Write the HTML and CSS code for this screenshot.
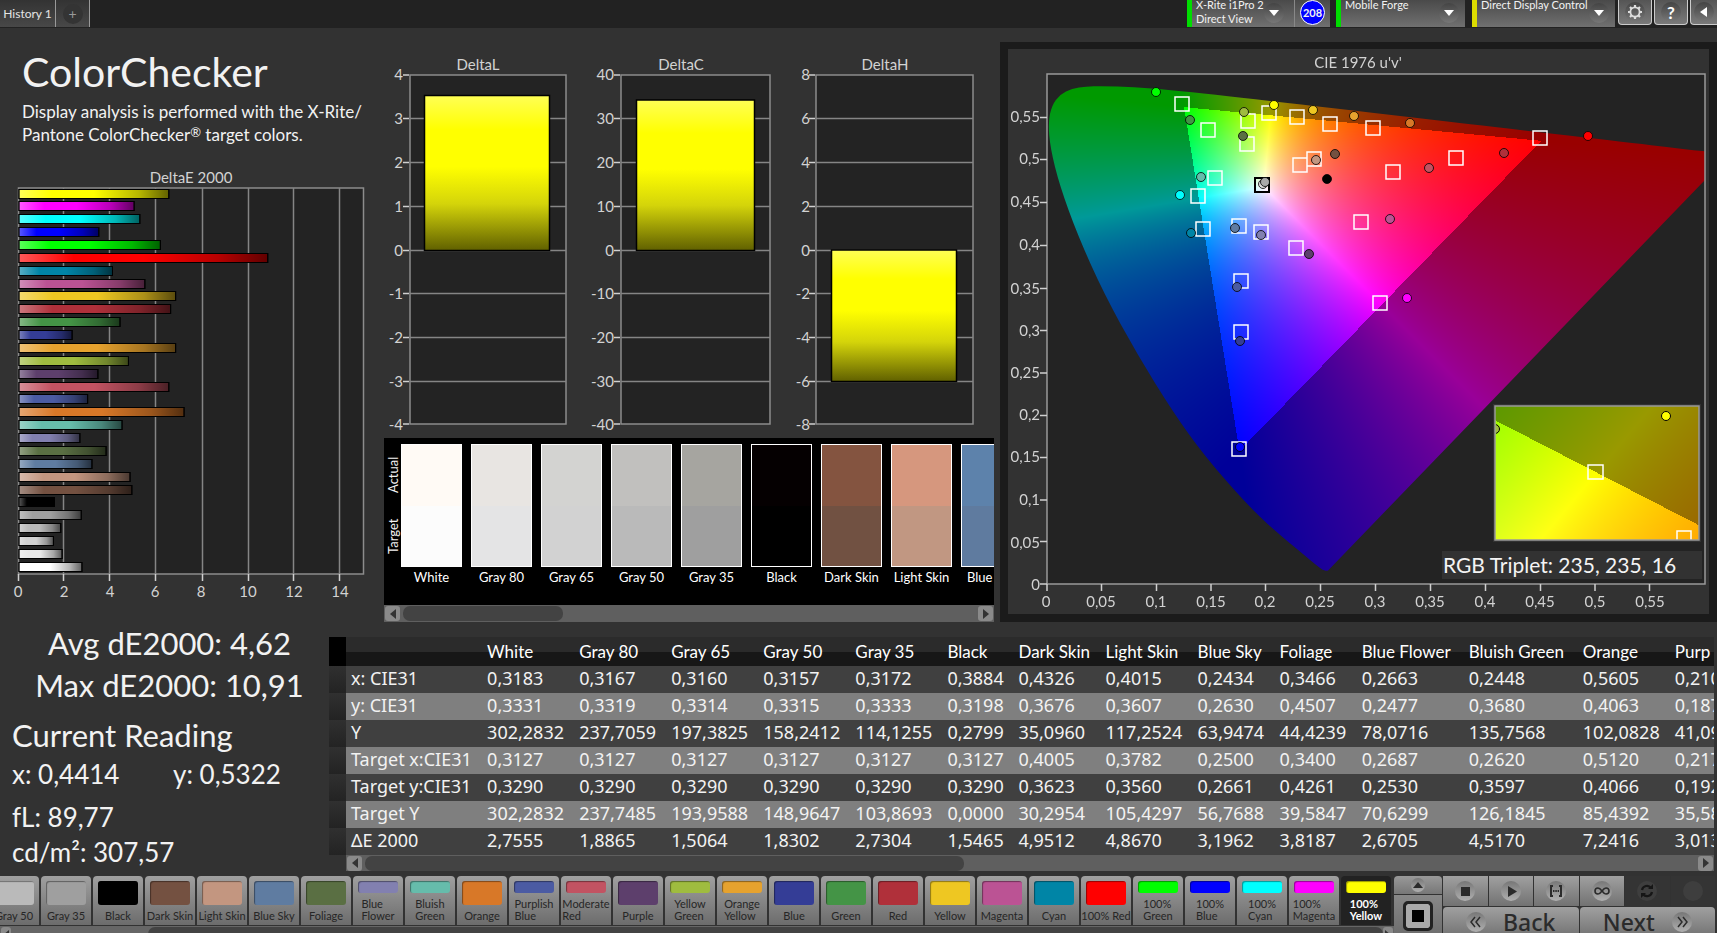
FILE: index.html
```html
<!DOCTYPE html>
<html lang="en">
<head>
<meta charset="utf-8">
<title>ColorChecker</title>
<link rel="stylesheet" href="styles.css">
</head>
<body>
<svg class="defs" width="0" height="0" aria-hidden="true">
  <defs>
    <linearGradient id="shade-h"><stop offset="0" stop-color="#fff" stop-opacity=".35"/><stop offset=".22" stop-color="#fff" stop-opacity="0"/><stop offset=".5" stop-color="#000" stop-opacity="0"/><stop offset=".8" stop-color="#000" stop-opacity=".28"/><stop offset="1" stop-color="#000" stop-opacity=".62"/></linearGradient>
    <linearGradient id="shade-v" x2="0" y2="1"><stop offset="0" stop-color="#ff5"/><stop offset=".22" stop-color="#ff0"/><stop offset=".46" stop-color="#ff0"/><stop offset=".7" stop-color="#d4d40a"/><stop offset="1" stop-color="#606000"/></linearGradient>
  </defs>
</svg>

<header class="topbar">
  <nav class="tabs">
    <button class="tab" type="button">History 1</button>
    <button class="tab tab-add" type="button" aria-label="Add history"><span class="knob">+</span></button>
  </nav>
  <div class="devices">
    <div class="device device-meter">
      <button class="device-main" type="button"><span>X-Rite i1Pro 2<br>Direct View</span><span class="knob"><span class="caret"></span></span></button>
      <span class="badge">208</span>
    </div>
    <button class="device device-source" type="button"><span>Mobile Forge</span><span class="knob"><span class="caret"></span></span></button>
    <button class="device device-display" type="button"><span>Direct Display Control</span><span class="knob"><span class="caret"></span></span></button>
    <div class="tools">
      <button class="tool" type="button" aria-label="Settings"><span class="knob"><svg width="18" height="18" viewBox="0 0 18 18"><circle cx="9" cy="9" r="4.6" fill="none" stroke="#ddd" stroke-width="1.8"/><path d="M9 2v2.500M9 13.500v2.500M2 9h2.500M13.500 9h2.500M4 4l1.700 1.700M12.300 12.300l1.700 1.700M4 14l1.700-1.700M12.300 5.700L14 4" stroke="#ddd" stroke-width="2.200"/></svg></span></button>
      <button class="tool" type="button" aria-label="Help"><span class="knob knob-help">?</span></button>
      <button class="tool" type="button" aria-label="Collapse"><span class="knob"><svg width="10" height="12" viewBox="0 0 10 12"><path d="M8 1v10L1 6z" fill="#fff"/></svg></span></button>
    </div>
  </div>
</header>

<main>
<div class="charts">
  <section class="summary">
    <h1>ColorChecker</h1>
    <p>Display analysis is performed with the X-Rite/<br>Pantone ColorChecker<sup>®</sup> target colors.</p>
    <svg class="chart" viewBox="0 0 384 437" role="img" aria-label="DeltaE 2000">
      <text x="191" y="15" text-anchor="middle">DeltaE 2000</text>
      <rect x="18.500" y="20" width="345" height="386" class="plot"/>
      <path class="grid" d="M63.500 20v386M109.500 20v386M155.500 20v386M202.500 20v386M248.500 20v386M293.500 20v386M339.500 20v386"/>
      <path class="tick" d="M18.500 406v7M63.500 406v7M109.500 406v7M155.500 406v7M202.500 406v7M248.500 406v7M293.500 406v7M339.500 406v7"/>
      <g id="bars"></g>
      <g text-anchor="middle"><text x="18" y="429">0</text><text x="64" y="429">2</text><text x="110" y="429">4</text><text x="155" y="429">6</text><text x="201" y="429">8</text><text x="248" y="429">10</text><text x="294" y="429">12</text><text x="340" y="429">14</text></g>
    </svg>
  </section>

  <section class="deltas">
    <svg class="chart" viewBox="0 0 616 388" role="img" aria-label="DeltaL, DeltaC and DeltaH">
      <g text-anchor="middle"><text x="94" y="20">DeltaL</text><text x="297" y="20">DeltaC</text><text x="501" y="20">DeltaH</text></g>
      <rect x="26" y="25" width="156" height="349" class="plot"/>
      <rect x="237" y="25" width="149" height="349" class="plot"/>
      <rect x="432" y="25" width="157" height="349" class="plot"/>
      <path class="grid" d="M26 68.500h156M26 112.500h156M26 156.500h156M26 200.500h156M26 243.500h156M26 287.500h156M26 331.500h156M237 68.500h149M237 112.500h149M237 156.500h149M237 200.500h149M237 243.500h149M237 287.500h149M237 331.500h149M432 68.500h157M432 112.500h157M432 156.500h157M432 200.500h157M432 243.500h157M432 287.500h157M432 331.500h157"/>
      <path class="tick" d="M19 25h6M19 68.500h6M19 112.500h6M19 156.500h6M19 200.500h6M19 243.500h6M19 287.500h6M19 331.500h6M19 374h6M230 25h6M230 68.500h6M230 112.500h6M230 156.500h6M230 200.500h6M230 243.500h6M230 287.500h6M230 331.500h6M230 374h6M425 25h6M425 68.500h6M425 112.500h6M425 156.500h6M425 200.500h6M425 243.500h6M425 287.500h6M425 331.500h6M425 374h6"/>
      <g fill="url(#shade-v)" stroke="#000" stroke-width="1.500"><rect x="40.500" y="45.500" width="125" height="155"/><rect x="252.500" y="50" width="118" height="150.500"/><rect x="447.500" y="200" width="125" height="131.500"/></g>
      <g text-anchor="end">
        <text x="19" y="30">4</text><text x="19" y="74">3</text><text x="19" y="118">2</text><text x="19" y="162">1</text><text x="19" y="206">0</text><text x="19" y="249">-1</text><text x="19" y="293">-2</text><text x="19" y="337">-3</text><text x="19" y="380">-4</text>
        <text x="230" y="30">40</text><text x="230" y="74">30</text><text x="230" y="118">20</text><text x="230" y="162">10</text><text x="230" y="206">0</text><text x="230" y="249">-10</text><text x="230" y="293">-20</text><text x="230" y="337">-30</text><text x="230" y="380">-40</text>
        <text x="426" y="30">8</text><text x="426" y="74">6</text><text x="426" y="118">4</text><text x="426" y="162">2</text><text x="426" y="206">0</text><text x="426" y="249">-2</text><text x="426" y="293">-4</text><text x="426" y="337">-6</text><text x="426" y="380">-8</text>
      </g>
    </svg>
    <div class="compare">
      <div class="compare-view">
        <div class="compare-rows"><span>Target</span><span>Actual</span></div>
        <figure class="pair"><div class="pair-box"><i style="background:#fffaf5"></i><i style="background:#fcfcfc"></i></div><figcaption>White</figcaption></figure>
        <figure class="pair"><div class="pair-box"><i style="background:#e8e5e2"></i><i style="background:#e4e4e5"></i></div><figcaption>Gray 80</figcaption></figure>
        <figure class="pair"><div class="pair-box"><i style="background:#d3d3d1"></i><i style="background:#d2d2d2"></i></div><figcaption>Gray 65</figcaption></figure>
        <figure class="pair"><div class="pair-box"><i style="background:#c1c0be"></i><i style="background:#bababa"></i></div><figcaption>Gray 50</figcaption></figure>
        <figure class="pair"><div class="pair-box"><i style="background:#a6a5a0"></i><i style="background:#9f9f9f"></i></div><figcaption>Gray 35</figcaption></figure>
        <figure class="pair"><div class="pair-box"><i style="background:#050001"></i><i style="background:#000000"></i></div><figcaption>Black</figcaption></figure>
        <figure class="pair"><div class="pair-box"><i style="background:#845440"></i><i style="background:#715142"></i></div><figcaption>Dark Skin</figcaption></figure>
        <figure class="pair"><div class="pair-box"><i style="background:#d6977e"></i><i style="background:#c19782"></i></div><figcaption>Light Skin</figcaption></figure>
        <figure class="pair"><div class="pair-box"><i style="background:#5d82ab"></i><i style="background:#5f7b9f"></i></div><figcaption>Blue Sky</figcaption></figure>
      </div>
      <div class="scroll">
        <button class="arrow arrow-left" type="button" aria-label="Scroll left"></button>
        <div class="track"><div class="thumb" style="width:28%"></div></div>
        <button class="arrow arrow-right" type="button" aria-label="Scroll right"></button>
      </div>
    </div>
  </section>

  <section class="cie">
    <div class="cie-stack">
      <canvas id="gamut" width="701" height="565"></canvas>
      <svg class="chart" viewBox="0 0 701 565" role="img" aria-label="CIE 1976 u'v' chromaticity diagram">
        <defs><clipPath id="inset-clip"><rect x="488" y="358" width="202" height="133"/></clipPath></defs>
        <text x="350" y="19" text-anchor="middle">CIE 1976 u'v'</text>
        <path d="M39 25H697V535H39Z" class="frame"/>
        <path class="tick" d="M32 535h7M32 492.500h7M32 451h7M32 408.500h7M32 366.500h7M32 324h7M32 281.500h7M32 239.500h7M32 196.500h7M32 153.500h7M32 110.500h7M32 68.500h7M39 535v7M93.500 535v7M148.500 535v7M203 535v7M257.500 535v7M312.500 535v7M367.500 535v7M422.500 535v7M477.500 535v7M532.500 535v7M587 535v7M641.500 535v7"/>
        <g text-anchor="end"><text x="32" y="541">0</text><text x="32" y="499">0,05</text><text x="32" y="456">0,1</text><text x="32" y="413">0,15</text><text x="32" y="371">0,2</text><text x="32" y="329">0,25</text><text x="32" y="287">0,3</text><text x="32" y="245">0,35</text><text x="32" y="201">0,4</text><text x="32" y="158">0,45</text><text x="32" y="115">0,5</text><text x="32" y="73">0,55</text></g>
        <g text-anchor="middle"><text x="38" y="558">0</text><text x="93" y="558">0,05</text><text x="148" y="558">0,1</text><text x="203" y="558">0,15</text><text x="257" y="558">0,2</text><text x="312" y="558">0,25</text><text x="367" y="558">0,3</text><text x="422" y="558">0,35</text><text x="477" y="558">0,4</text><text x="532" y="558">0,45</text><text x="587" y="558">0,5</text><text x="642" y="558">0,55</text></g>
        <path class="target" d="M167 48h14v14h-14zM193 74h14v14h-14zM233 65h14v14h-14zM232 88h14v14h-14zM254 57h14v14h-14zM282 61h14v14h-14zM315 68h14v14h-14zM358 72h14v14h-14zM525 82h14v14h-14zM441 102h14v14h-14zM378 116h14v14h-14zM299 103h14v14h-14zM285 109h14v14h-14zM200 122h14v14h-14zM183 140h14v14h-14zM188 173h14v14h-14zM224 170h14v14h-14zM246 176h14v14h-14zM281 192h14v14h-14zM346 166h14v14h-14zM365 247h14v14h-14zM226 225h14v14h-14zM226 276h14v14h-14zM224 393h14v14h-14z"/>
        <path d="M247 129h14v14h-14z" fill="none" stroke="#000" stroke-width="2"/>
        <g stroke="#000" stroke-opacity=".8">
          <circle cx="148" cy="43" r="4.500" fill="#0f0"/><circle cx="182" cy="71" r="4.500" fill="#449446"/><circle cx="236" cy="63" r="4.500" fill="#9fbc3f"/><circle cx="266" cy="56" r="4.500" fill="#ff0"/><circle cx="305" cy="61" r="4.500" fill="#eec722"/><circle cx="346" cy="67" r="4.500" fill="#e6a22e"/><circle cx="402" cy="74" r="4.500" fill="#d87828"/><circle cx="580" cy="87" r="4.500" fill="#f00"/><circle cx="496" cy="104" r="4.500" fill="#b0303a"/><circle cx="421" cy="119" r="4.500" fill="#c25362"/><circle cx="327" cy="105" r="4.500" fill="#745141"/><circle cx="308" cy="111" r="4.500" fill="#c39680"/><circle cx="319" cy="130" r="4.500" fill="#000"/><circle cx="255" cy="135" r="4.500" fill="#ddd"/><circle cx="257" cy="133" r="4.500" fill="#aaa"/><circle cx="235" cy="87" r="4.500" fill="#5a6f43"/><circle cx="193" cy="128" r="4.500" fill="#66bcab"/><circle cx="172" cy="146" r="4.500" fill="#0ff"/><circle cx="183" cy="184" r="4.500" fill="#0085a6"/><circle cx="227" cy="179" r="4.500" fill="#5f7ca1"/><circle cx="253" cy="186" r="4.500" fill="#8280b0"/><circle cx="301" cy="205" r="4.500" fill="#5d3f6c"/><circle cx="382" cy="170" r="4.500" fill="#bb5394"/><circle cx="399" cy="249" r="4.500" fill="#f0f"/><circle cx="229" cy="238" r="4.500" fill="#4b5ba3"/><circle cx="232" cy="292" r="4.500" fill="#343d96"/><circle cx="232" cy="398" r="4.500" fill="#00f"/>
        </g>
        <g clip-path="url(#inset-clip)"><circle cx="487" cy="380" r="4.500" fill="#9fbc3f" stroke="#000"/><circle cx="658" cy="367" r="4.500" fill="#ff0" stroke="#000"/><path class="target" d="M580 416h15v14h-15zM669 482h14v14h-14z"/></g>
        <rect x="487" y="357" width="204" height="134" class="frame"/>
        <rect x="434" y="502" width="260" height="28" fill="#323232"/>
        <text x="435" y="524" class="triplet">RGB Triplet: 235, 235, 16</text>
      </svg>
    </div>
  </section>
</div>

<div class="readings">
  <section class="stats">
    <p class="stat-large">Avg dE2000: 4,62</p>
    <p class="stat-large">Max dE2000: 10,91</p>
    <h2>Current Reading</h2>
    <p class="stat-pair"><span>x: 0,4414</span><span>y: 0,5322</span></p>
    <p class="stat-line">fL: 89,77</p>
    <p class="stat-line">cd/m²: 307,57</p>
  </section>
  <section class="data">
    <table>
      <colgroup><col class="c-mark"><col class="c-name"><col class="c-l"><col class="c-l"><col class="c-l"><col class="c-l"><col class="c-l"><col class="c-s"><col class="c-m"><col class="c-l"><col class="c-f"><col class="c-f"><col class="c-w"><col class="c-x"><col class="c-l"><col class="c-l"></colgroup>
      <thead><tr><th></th><th></th><th scope="col">White</th><th scope="col">Gray 80</th><th scope="col">Gray 65</th><th scope="col">Gray 50</th><th scope="col">Gray 35</th><th scope="col">Black</th><th scope="col">Dark Skin</th><th scope="col">Light Skin</th><th scope="col">Blue Sky</th><th scope="col">Foliage</th><th scope="col">Blue Flower</th><th scope="col">Bluish Green</th><th scope="col">Orange</th><th scope="col">Purp</th></tr></thead>
      <tbody>
        <tr><td></td><th scope="row">x: CIE31</th><td>0,3183</td><td>0,3167</td><td>0,3160</td><td>0,3157</td><td>0,3172</td><td>0,3884</td><td>0,4326</td><td>0,4015</td><td>0,2434</td><td>0,3466</td><td>0,2663</td><td>0,2448</td><td>0,5605</td><td>0,210</td></tr>
        <tr><td></td><th scope="row">y: CIE31</th><td>0,3331</td><td>0,3319</td><td>0,3314</td><td>0,3315</td><td>0,3333</td><td>0,3198</td><td>0,3676</td><td>0,3607</td><td>0,2630</td><td>0,4507</td><td>0,2477</td><td>0,3680</td><td>0,4063</td><td>0,187</td></tr>
        <tr><td></td><th scope="row">Y</th><td>302,2832</td><td>237,7059</td><td>197,3825</td><td>158,2412</td><td>114,1255</td><td>0,2799</td><td>35,0960</td><td>117,2524</td><td>63,9474</td><td>44,4239</td><td>78,0716</td><td>135,7568</td><td>102,0828</td><td>41,09</td></tr>
        <tr><td></td><th scope="row">Target x:CIE31</th><td>0,3127</td><td>0,3127</td><td>0,3127</td><td>0,3127</td><td>0,3127</td><td>0,3127</td><td>0,4005</td><td>0,3782</td><td>0,2500</td><td>0,3400</td><td>0,2687</td><td>0,2620</td><td>0,5120</td><td>0,217</td></tr>
        <tr><td></td><th scope="row">Target y:CIE31</th><td>0,3290</td><td>0,3290</td><td>0,3290</td><td>0,3290</td><td>0,3290</td><td>0,3290</td><td>0,3623</td><td>0,3560</td><td>0,2661</td><td>0,4261</td><td>0,2530</td><td>0,3597</td><td>0,4066</td><td>0,192</td></tr>
        <tr><td></td><th scope="row">Target Y</th><td>302,2832</td><td>237,7485</td><td>193,9588</td><td>148,9647</td><td>103,8693</td><td>0,0000</td><td>30,2954</td><td>105,4297</td><td>56,7688</td><td>39,5847</td><td>70,6299</td><td>126,1845</td><td>85,4392</td><td>35,58</td></tr>
        <tr><td></td><th scope="row">ΔE 2000</th><td>2,7555</td><td>1,8865</td><td>1,5064</td><td>1,8302</td><td>2,7304</td><td>1,5465</td><td>4,9512</td><td>4,8670</td><td>3,1962</td><td>3,8187</td><td>2,6705</td><td>4,5170</td><td>7,2416</td><td>3,013</td></tr>
      </tbody>
    </table>
    <div class="scroll">
      <button class="arrow arrow-left" type="button" aria-label="Scroll left"></button>
      <div class="track"><div class="thumb" style="width:45%"></div></div>
      <button class="arrow arrow-right" type="button" aria-label="Scroll right"></button>
    </div>
  </section>
</div>
</main>

<footer class="dock">
  <div class="patches">
    <div class="patch-list">
      <button class="patch" type="button"><i style="background:#bababa"></i><span>Gray 50</span></button>
      <button class="patch" type="button"><i style="background:#9f9f9f"></i><span>Gray 35</span></button>
      <button class="patch" type="button"><i style="background:#000000"></i><span>Black</span></button>
      <button class="patch" type="button"><i style="background:#745141"></i><span>Dark Skin</span></button>
      <button class="patch" type="button"><i style="background:#c39680"></i><span>Light Skin</span></button>
      <button class="patch" type="button"><i style="background:#5f7ca1"></i><span>Blue Sky</span></button>
      <button class="patch" type="button"><i style="background:#5a6f43"></i><span>Foliage</span></button>
      <button class="patch two" type="button"><i style="background:#8280b0"></i><span>Blue<br>Flower</span></button>
      <button class="patch two" type="button"><i style="background:#66bcab"></i><span>Bluish<br>Green</span></button>
      <button class="patch" type="button"><i style="background:#d87828"></i><span>Orange</span></button>
      <button class="patch two" type="button"><i style="background:#4b5ba3"></i><span>Purplish<br>Blue</span></button>
      <button class="patch two" type="button"><i style="background:#c25362"></i><span>Moderate<br>Red</span></button>
      <button class="patch" type="button"><i style="background:#5d3f6c"></i><span>Purple</span></button>
      <button class="patch two" type="button"><i style="background:#9fbc3f"></i><span>Yellow<br>Green</span></button>
      <button class="patch two" type="button"><i style="background:#e6a22e"></i><span>Orange<br>Yellow</span></button>
      <button class="patch" type="button"><i style="background:#343d96"></i><span>Blue</span></button>
      <button class="patch" type="button"><i style="background:#449446"></i><span>Green</span></button>
      <button class="patch" type="button"><i style="background:#b0303a"></i><span>Red</span></button>
      <button class="patch" type="button"><i style="background:#eec722"></i><span>Yellow</span></button>
      <button class="patch" type="button"><i style="background:#bb5394"></i><span>Magenta</span></button>
      <button class="patch" type="button"><i style="background:#0085a6"></i><span>Cyan</span></button>
      <button class="patch" type="button"><i style="background:#ff0000"></i><span>100% Red</span></button>
      <button class="patch two" type="button"><i style="background:#00ff00"></i><span>100%<br>Green</span></button>
      <button class="patch two" type="button"><i style="background:#0000ff"></i><span>100%<br>Blue</span></button>
      <button class="patch two" type="button"><i style="background:#00ffff"></i><span>100%<br>Cyan</span></button>
      <button class="patch two" type="button"><i style="background:#ff00ff"></i><span>100%<br>Magenta</span></button>
      <button class="patch two selected" type="button"><i style="background:#ffff00"></i><span>100%<br>Yellow</span></button>
    </div>
    <div class="scroll scroll-dock">
      <button class="arrow arrow-left" type="button" aria-label="Scroll left"></button>
      <div class="track"><div class="thumb thumb-end" style="width:90%"></div></div>
      <button class="arrow arrow-right" type="button" aria-label="Scroll right"></button>
    </div>
  </div>
  <div class="monitor">
    <button class="monitor-up" type="button" aria-label="Expand"><span class="knob-light"><svg width="10" height="6" viewBox="0 0 10 6"><path d="M5 0l5 6H0z" fill="#2b2b2b"/></svg></span></button>
    <button class="monitor-window" type="button" aria-label="Pattern window"><span></span></button>
  </div>
  <div class="transport">
    <button type="button" aria-label="Stop"><span class="knob-light"><svg width="20" height="20" viewBox="0 0 20 20"><path d="M6 6h9v9H6z" fill="#2b2b2b"/></svg></span></button>
    <button type="button" aria-label="Play"><span class="knob-light"><svg width="20" height="20" viewBox="0 0 20 20"><path d="M7 5l9 5.500-9 5.500z" fill="#2b2b2b"/></svg></span></button>
    <button type="button" aria-label="Read series"><span class="knob-light"><svg width="20" height="20" viewBox="0 0 20 20" fill="none" stroke="#2b2b2b" stroke-width="2"><path d="M7 5H5v10h2M13 5h2v10h-2"/><path d="M7 10h6" stroke-dasharray="1.500 .8"/></svg></span></button>
    <button type="button" aria-label="Read continuously"><span class="knob-light"><svg width="20" height="20" viewBox="0 0 20 20" fill="none" stroke="#2b2b2b" stroke-width="1.600"><path d="M10 10c-1.500-2-2.500-3-4-3a3 3 0 0 0 0 6c1.500 0 2.500-1 4-3s2.500-3 4-3a3 3 0 0 1 0 6c-1.500 0-2.500-1-4-3z"/></svg></span></button>
    <button class="off" type="button" aria-label="Repeat"><span class="knob-light"><svg width="20" height="20" viewBox="0 0 20 20" fill="none" stroke="#161616" stroke-width="2.200"><path d="M5 9a5 5 0 0 1 9-2M15 11a5 5 0 0 1-9 2"/><path d="M16 3v5h-5zM4 17v-5h5z" fill="#161616" stroke="none"/></svg></span></button>
    <button class="off" type="button" aria-label="Record"><span class="knob-light"></span></button>
    <button class="step" type="button"><span class="knob-light"><svg width="18" height="18" viewBox="0 0 18 18" fill="none" stroke="#2b2b2b" stroke-width="1.500"><path d="M8 4L4 9l4 5M13 4L9 9l4 5"/></svg></span><span>Back</span></button>
    <button class="step" type="button"><span>Next</span><span class="knob-light"><svg width="18" height="18" viewBox="0 0 18 18" fill="none" stroke="#2b2b2b" stroke-width="1.500"><path d="M5 4l4 5-4 5M10 4l4 5-4 5"/></svg></span></button>
  </div>
</footer>
<script src="script.js"></script>
</body>
</html>
```
FILE: styles.css
```css
* { box-sizing: border-box; }
body {
  margin: 0;
  min-height: 100vh;
  background: #323232;
  color: #f2f2f2;
  font-family: Lato, "Open Sans", sans-serif;
  font-size: 15px;
  overflow-x: hidden;
}
button { font: inherit; color: inherit; border: 0; padding: 0; background: none; }
h1, h2, p, figure { margin: 0; font-weight: 400; }
svg, canvas { display: block; }
sup { font-size: 13px; line-height: 0; vertical-align: 4px; }
.defs { position: absolute; }

/* top bar */
.topbar { display: flex; justify-content: space-between; height: 28px; background: #222; overflow: hidden; }
.tabs { display: flex; height: 27px; }
.tab {
  width: 56px;
  font-size: 12px;
  color: #e4e4e4;
  background: linear-gradient(#333, #484848);
  border-right: 1px solid #999;
}
.tab-add { width: 34px; display: flex; align-items: center; justify-content: center; }
.tab-add .knob { background: #343434; color: #999; font-size: 14px; }
.knob {
  display: flex;
  flex: none;
  align-items: center;
  justify-content: center;
  width: 20px;
  height: 20px;
  border-radius: 50%;
  background: linear-gradient(#444, #777);
}
.caret { border: 5px solid transparent; border-top: 6px solid #fff; border-bottom: 0; }
.devices { display: flex; height: 27px; }
.device {
  display: flex;
  align-items: flex-start;
  justify-content: space-between;
  height: 27px;
  margin-right: 7px;
  font-size: 11px;
  line-height: 14px;
  text-align: left;
  color: #f2f2f2;
  background: linear-gradient(#4a4a4a, #707070);
  border-left: 5px solid #0d0;
}
.device .knob { margin-top: 3px; }
.device-meter { width: 143px; margin-right: 6px; }
.device-main { display: flex; flex: 1; height: 27px; justify-content: space-between; align-items: flex-start; padding: 0 10px 0 4px; border-right: 1px solid #888; text-align: left; line-height: 14px; }
.device-source { width: 129px; padding: 0 6px 0 4px; }
.device-display { width: 143px; padding: 0 6px 0 4px; border-left-color: #dd0; margin-right: 3px; }
.device-source > span:first-child, .device-display > span:first-child, .device-main > span:first-child { margin-top: -2px; white-space: nowrap; }
.badge {
  flex: none;
  width: 25px;
  height: 25px;
  margin: 0 5px;
  border: 1px solid #fff;
  border-radius: 50%;
  background: #00f;
  font-size: 11px;
  font-weight: 700;
  line-height: 23px;
  text-align: center;
}
.tools { display: flex; gap: 2px; }
.tool {
  display: flex;
  align-items: center;
  justify-content: center;
  width: 34px;
  height: 25px;
  background: linear-gradient(#555, #7a7a7a);
  border: 1px solid #ccc;
  border-top: 0;
  border-radius: 0 0 4px 4px;
}
.tool:last-child { width: 27px; border-right: 0; border-bottom-right-radius: 0; }
.knob-help { font-size: 17px; font-weight: 700; color: #fff; }

/* charts row */
.charts { display: grid; grid-template-columns: minmax(0, 384fr) minmax(0, 616fr) minmax(0, 717fr); align-items: start; }
.chart { width: 100%; height: auto; font-size: 15px; fill: #d2d2d2; }
.plot { fill: #232323; stroke: #8c8c8c; stroke-width: 1.5px; }
.frame { fill: none; stroke: #999; stroke-width: 1.5px; }
.grid { stroke: #858585; stroke-width: 1.5px; fill: none; }
.tick { stroke: #d0d0d0; stroke-width: 1.5px; fill: none; }
.target { fill: none; stroke: #fff; stroke-width: 1.5px; }
.triplet { font-size: 21px; fill: #f4f4f4; }
.summary { padding-top: 20px; }
.summary h1 { margin-left: 22px; font-size: 41px; line-height: 48px; }
.summary p { margin: 4px 0 22px 22px; font-size: 17px; line-height: 23px; white-space: nowrap; }
.deltas { padding-top: 22px; }
.compare { margin-right: 6px; background: #000; overflow: hidden; }
.compare-view { display: flex; gap: 9px; height: 167px; padding-top: 6px; overflow: hidden; }
.compare-rows { display: flex; flex: none; flex-direction: row; width: 17px; height: 123px; margin-right: -9px; align-items: center; justify-content: space-around; font-size: 13px; line-height: 16px; writing-mode: vertical-rl; transform: rotate(180deg); }
.pair { flex: none; width: 61px; }
.pair-box { height: 123px; border: 1px solid #fff; }
.pair-box i { display: block; height: 50%; }
.pair figcaption { margin: 1px -8px 0; font-size: 13px; line-height: 18px; text-align: center; color: #fff; white-space: nowrap; }
.scroll { display: flex; align-items: center; height: 17px; padding: 0 1px; background: #5f5f5f; }
.track { flex: 1; height: 15px; padding: 0 3px; }
.thumb { height: 15px; border-radius: 7px; background: #434343; }
.arrow { display: flex; align-items: center; justify-content: center; width: 15px; height: 15px; background: #8a8a8a; border-radius: 3px; }
.arrow::before { content: ""; border: 5px solid transparent; }
.arrow-left::before { border-right: 6px solid #333; border-left: 0; }
.arrow-right::before { border-left: 6px solid #333; border-right: 0; }
.cie { margin-top: 14px; padding: 7px 8px 8px; background: #1b1b1b; }
.cie-stack { display: grid; background: #323232; }
.cie-stack > * { grid-area: 1 / 1; width: 100%; height: auto; }

/* readings row */
.readings { display: grid; grid-template-columns: 329px minmax(0, 1fr); }
.stats { white-space: nowrap; }
.stat-large { font-size: 31px; line-height: 42px; padding-left: 10px; text-align: center; }
.stats h2 { margin: 8px 0 0 12px; font-size: 31px; line-height: 42px; }
.stat-pair { display: grid; grid-template-columns: 161px 1fr; margin-left: 12px; font-size: 26px; line-height: 36px; }
.stat-line { margin-left: 12px; font-size: 26px; line-height: 35px; }
.stat-pair + .stat-line { margin-top: 8px; }
.data { margin: 15px 3px 0 0; overflow: hidden; }
.data .scroll { margin-left: 17px; height: 16px; }
table { width: 1438px; table-layout: fixed; border-collapse: collapse; font-family: "Noto Sans", sans-serif; font-size: 18px; }
.c-mark { width: 17px; }
.c-name { width: 141px; }
.c-l { width: 92px; }
.c-s { width: 71px; }
.c-m { width: 87px; }
.c-f { width: 82px; }
.c-w { width: 107px; }
.c-x { width: 114px; }
th, td { height: 27px; padding: 0; font-weight: 400; text-align: left; line-height: 25px; padding-bottom: 2px; white-space: nowrap; }
thead th { height: 29px; padding-bottom: 0; font-family: Lato, sans-serif; font-size: 17px; color: #fff; background: linear-gradient(#2b2b2b 50%, #171717 50%); }
thead th:first-child { background: #000; }
tbody th { padding-left: 5px; }
tbody tr { background: #404040; }
tbody tr:nth-child(even) { background: #7f7f7f; }
tbody td:first-child { background: linear-gradient(#303030, #232323); }

/* dock */
.dock { display: grid; grid-template-columns: minmax(0, 1fr) 49px 274px; height: 58px; margin-top: 5px; overflow: hidden; }
.patches { overflow: hidden; }
.patch-list { display: flex; justify-content: flex-end; gap: 2px; padding-right: 3px; height: 50px; }
.patch {
  display: flex;
  flex: none;
  flex-direction: column;
  align-items: center;
  width: 50px;
  height: 49px;
  padding-top: 5px;
  font-size: 11px;
  line-height: 12px;
  color: #262626;
  text-align: left;
  white-space: nowrap;
  background: linear-gradient(#a0a0a0, #6c6c6c);
  border-radius: 4px 4px 0 0;
}
.patch i { flex: none; width: 40px; height: 24px; margin-bottom: 5px; border-radius: 3px; box-shadow: inset 1px 1px 1px #0006; }
.patch.two i { height: 12px; }
.patch.selected { background: #222; color: #fff; font-weight: 700; }
.scroll-dock { height: 17px; background: #666; }
.scroll-dock .arrow { width: 10px; }
.scroll-dock .track { padding: 0; }
.thumb-end { margin-left: auto; }
.monitor { display: flex; flex-direction: column; gap: 1px; }
.monitor button { display: flex; align-items: center; justify-content: center; width: 48px; background: linear-gradient(#999, #777); }
.monitor .monitor-up { height: 18px; border-radius: 4px 4px 0 0; }
.monitor .monitor-window { height: 42px; background: linear-gradient(#888, #6c6c6c); }
.monitor-window span { width: 30px; height: 30px; border: 3px solid #222; border-radius: 5px; background: #000; box-shadow: inset 0 0 0 6px #aaa; }
.monitor .knob-light { width: 14px; height: 14px; }
.knob-light { display: flex; flex: none; align-items: center; justify-content: center; width: 20px; height: 20px; border-radius: 50%; background: linear-gradient(#777, #b0b0b0); }
.transport { display: grid; grid-template-columns: repeat(6, 1fr); grid-template-rows: 30px 30px; gap: 1px; padding-right: 2px; }
.transport button { display: flex; align-items: center; justify-content: center; background: linear-gradient(#a0a0a0, #727272); }
.transport .off { background: #343434; }
.transport .off .knob-light { background: #3e3e3e; }
.transport .step { grid-column: span 3; gap: 17px; color: #2b2b2b; font-family: "Noto Sans", sans-serif; font-size: 23px; font-weight: 500; line-height: 30px; border-radius: 4px 4px 0 0; }
```
FILE: script.js
```js
// DeltaE bars: [value, colour]
const bars = [
  [6.57, '#ffff00'], [5.05, '#ff00ff'], [5.3, '#00ffff'], [3.5, '#0000ff'], [6.2, '#00ff00'],
  [10.91, '#ff0000'], [4.1, '#0085a6'], [5.52, '#bb5394'], [6.87, '#eec722'], [6.65, '#b0303a'],
  [4.43, '#449446'], [2.33, '#343d96'], [6.87, '#e6a22e'], [4.8, '#9fbc3f'], [3.46, '#5d3f6c'],
  [6.57, '#c25362'], [3.01, '#4b5ba3'], [7.24, '#d87828'], [4.52, '#66bcab'], [2.67, '#8280b0'],
  [3.82, '#5a6f43'], [3.2, '#5f7ca1'], [4.87, '#c39680'], [4.95, '#745141'], [1.55, '#000000'],
  [2.73, '#9f9f9f'], [1.83, '#bababa'], [1.51, '#d2d2d2'], [1.89, '#e8e8e8'], [2.76, '#ffffff']
];
const group = document.getElementById('bars');
const ns = 'http://www.w3.org/2000/svg';
bars.forEach(([value, colour], i) => {
  for (const fill of [colour, 'url(#shade-h)']) {
    const r = document.createElementNS(ns, 'rect');
    r.setAttribute('x', 19);
    r.setAttribute('y', Math.round(20.5 + i * 12.87) + 0.5);
    r.setAttribute('width', value * 22.8);
    r.setAttribute('height', 9);
    r.setAttribute('fill', fill);
    r.setAttribute('stroke', '#000');
    group.append(r);
  }
});

// Chromaticity diagram
const canvas = document.getElementById('gamut');
const ctx = canvas.getContext('2d');
const X0 = 38.6, Y0 = 535.5, SX = 1096, SY = 849.5;
const locus = [
  [.1741, .005], [.1733, .0048], [.1714, .0051], [.1689, .0069], [.1644, .0109], [.1566, .0177],
  [.144, .0297], [.1241, .0578], [.1096, .0868], [.0913, .1327], [.0687, .2007], [.0454, .295],
  [.0235, .4127], [.0082, .5384], [.0039, .6548], [.0139, .7502], [.0389, .812], [.0743, .8338],
  [.1142, .8262], [.1547, .8059], [.2296, .7543], [.3016, .6923], [.3731, .6245], [.4441, .5547],
  [.5125, .4866], [.5752, .4242], [.627, .3725], [.6915, .3083], [.719, .2809], [.7347, .2653]
];

function linear(u, v) {
  const X = 9 * u / (4 * v), Z = (12 - 3 * u - 20 * v) / (4 * v);
  return [
    3.2406 * X - 1.5372 - 0.4986 * Z,
    -0.9689 * X + 1.8758 + 0.0415 * Z,
    0.0557 * X - 0.204 + 1.057 * Z
  ];
}
function put(data, k, rgb, outside) {
  const m = Math.max(...rgb), f = outside ? 153 : 255;
  for (let c = 0; c < 3; c++) data[k + c] = f * Math.pow(Math.max(0, rgb[c]) / m, 0.95);
  data[k + 3] = 255;
}
function layer(w, h, paint) {
  const c = document.createElement('canvas');
  c.width = w;
  c.height = h;
  const cx = c.getContext('2d'), img = cx.createImageData(w, h);
  for (let y = 0; y < h; y++) for (let x = 0; x < w; x++) paint(img.data, (y * w + x) * 4, x, y);
  cx.putImageData(img, 0, 0);
  return c;
}

ctx.fillStyle = '#232323';
ctx.fillRect(39, 25, 658, 510);
const full = layer(701, 565, (d, k, x, y) => {
  const rgb = linear((x - X0) / SX, Math.max(.002, (Y0 - y) / SY));
  put(d, k, rgb, Math.min(...rgb) < 0);
});
ctx.save();
ctx.beginPath();
ctx.rect(39, 25, 658, 510);
ctx.clip();
ctx.beginPath();
const pts = locus.map(([x, y]) => {
  const n = -2 * x + 12 * y + 3;
  return [X0 + SX * 4 * x / n, Y0 - SY * 9 * y / n];
});
ctx.moveTo(...pts[0]);
for (let i = 1; i < pts.length - 1; i++) {
  ctx.quadraticCurveTo(...pts[i], (pts[i][0] + pts[i + 1][0]) / 2, (pts[i][1] + pts[i + 1][1]) / 2);
}
ctx.lineTo(...pts[pts.length - 1]);
ctx.closePath();
ctx.clip();
ctx.drawImage(full, 0, 0);
ctx.restore();

// Magnified view around the selected patch
ctx.fillStyle = '#323232';
ctx.fillRect(485, 355, 208, 138);
ctx.drawImage(layer(204, 134, (d, k, x, y) => {
  const dx = x - 101, dy = y - 66;
  const b = (dy - .515 * dx) / 1.23;
  const a = dx + .72 * b;
  const rgb = linear(.2039 + a * .00025 - b * .000008, .5529 - a * .00003 - b * .00011);
  if (b < 0) rgb[2] = 0;
  put(d, k, rgb, b < 0);
}), 487, 357);
```
